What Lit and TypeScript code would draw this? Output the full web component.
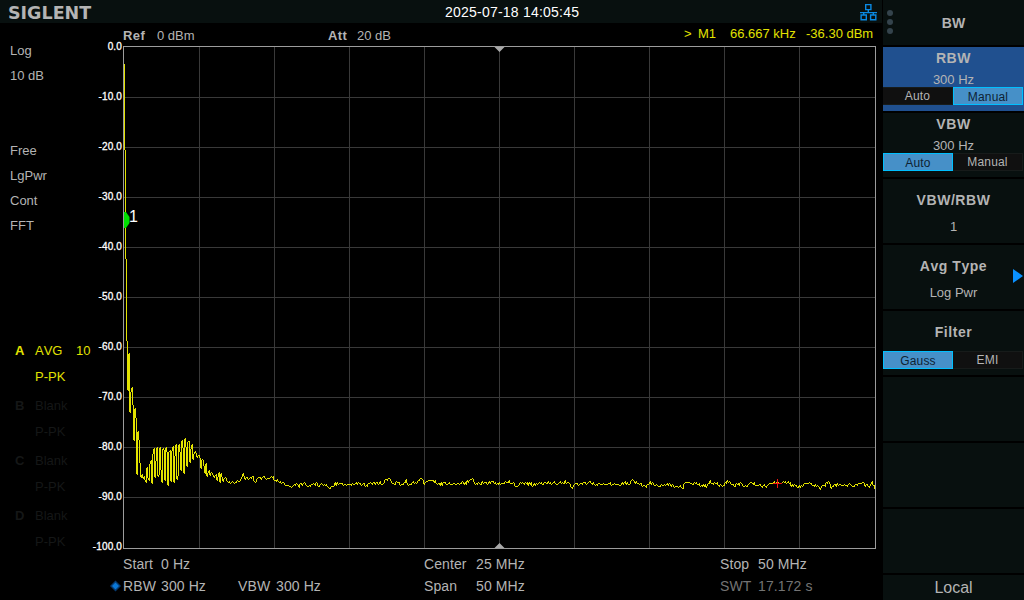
import { LitElement, html, svg, css, nothing } from 'lit';
import { customElement, property } from 'lit/decorators.js';
import { classMap } from 'lit/directives/class-map.js';

interface MenuItem {
  title?: string;
  value?: string;
  options?: string[];
  picked?: number;
  active?: boolean;
  submenu?: boolean;
}

const menu: MenuItem[] = [
  { title: 'RBW', value: '300 Hz', options: ['Auto', 'Manual'], picked: 1, active: true },
  { title: 'VBW', value: '300 Hz', options: ['Auto', 'Manual'], picked: 0 },
  { title: 'VBW/RBW', value: '1' },
  { title: 'Avg Type', value: 'Log Pwr', submenu: true },
  { title: 'Filter', options: ['Gauss', 'EMI'], picked: 0 },
  {},
  {},
  {},
];

const traces = [
  { id: 'A', mode: 'AVG', count: '10', detector: 'P-PK', on: true },
  { id: 'B', mode: 'Blank', count: '', detector: 'P-PK', on: false },
  { id: 'C', mode: 'Blank', count: '', detector: 'P-PK', on: false },
  { id: 'D', mode: 'Blank', count: '', detector: 'P-PK', on: false },
];

const levels = ['0.0', '-10.0', '-20.0', '-30.0', '-40.0', '-50.0', '-60.0', '-70.0', '-80.0', '-90.0', '-100.0'];

// the plot starts at this point of the screen
const PLOT_X = 123;
const PLOT_Y = 46;

// start of the sweep: LO feedthrough and the hump next to it, as x, y
const nearDc = [
  124, 64, 125, 150, 126, 259, 127, 341, 128, 390, 129, 353, 130, 412, 131, 391, 132, 387,
  133, 405, 134, 440, 135, 408, 136, 418, 137, 474, 138, 431, 139, 440, 140, 463, 141, 477, 142, 474,
  143, 478, 144, 476, 145, 480, 146, 482, 147, 467, 148, 478, 149, 480, 150, 463, 151, 460, 152, 483,
  153, 453, 154, 448, 155, 477, 156, 460, 157, 447, 158, 476, 159, 474, 160, 447, 161, 470, 162, 482,
  163, 448, 164, 450, 165, 480, 166, 447, 167, 452, 168, 485, 169, 451, 170, 450, 171, 481, 172, 450,
  173, 446, 174, 482, 175, 455, 176, 444, 177, 479, 178, 475, 179, 444, 180, 452, 181, 470, 182, 440,
  183, 448, 184, 473, 185, 438, 186, 447, 187, 466, 188, 441, 189, 441, 190, 462, 191, 448, 192, 444,
  193, 459, 194, 453, 195, 451, 196, 453, 197, 457, 198, 455, 199, 455, 200, 458, 201, 468, 202, 459,
  203, 460, 204, 466, 205, 473, 206, 463, 207, 476, 208, 472, 209, 470, 210, 475, 211, 472, 212, 473,
  213, 475, 214, 477, 215, 475, 216, 474, 217, 480, 218, 476, 219, 472,
];

// noise floor
const floor = [
  220, 482, 221, 473, 223, 480, 225, 477, 227, 481, 230, 482, 235, 482, 237, 480, 239, 481, 243, 474,
  245, 478, 248, 479, 252, 477, 255, 480, 258, 478, 262, 477, 265, 478, 270, 477, 273, 477, 274, 480,
  280, 481, 283, 483, 288, 486, 292, 487, 294, 484, 298, 486, 304, 482, 308, 487, 313, 483, 320, 485,
  325, 484, 329, 487, 335, 484, 343, 484, 349, 485, 355, 483, 367, 485, 373, 482, 378, 483, 383, 482,
  389, 477, 392, 484, 396, 482, 402, 484, 406, 481, 408, 484, 415, 482, 421, 478, 424, 482, 434, 481,
  437, 484, 447, 483, 455, 484, 462, 481, 465, 483, 472, 479, 475, 483, 487, 483, 493, 481, 500, 484,
  508, 480, 516, 486, 520, 482, 532, 484, 540, 483, 553, 482, 557, 484, 565, 481, 568, 483, 572, 487,
  575, 483, 582, 484, 587, 482, 593, 483, 603, 484, 610, 483, 618, 484, 622, 482, 628, 483, 632, 481,
  637, 482, 640, 484, 646, 486, 650, 482, 657, 485, 665, 484, 673, 485, 683, 487, 685, 482, 698, 484,
  707, 486, 710, 481, 723, 486, 727, 480, 733, 485, 740, 483, 747, 486, 750, 482, 758, 485, 767, 485,
  773, 483, 780, 482, 785, 481, 793, 485, 798, 486, 807, 483, 817, 485, 821, 488, 828, 481, 831, 487,
  837, 484, 845, 484, 853, 485, 862, 482, 868, 486, 872, 482, 875, 488,
];

const points = [...nearDc, ...floor];

function levelAt(x: number): number {
  let k = 0;
  while (k + 4 < points.length && points[k + 2] <= x) k += 2;
  const [x0, y0, x1, y1] = points.slice(k, k + 4);
  let y = y0 + ((y1 - y0) * (x - x0)) / (x1 - x0);
  if (x > 221) {
    const n = Math.abs(Math.sin(x * 12.9898) * 43758.5453) % 1;
    y += (n - 0.5) * 3.4;
  }
  return Math.round(y);
}

// one vertical stroke per screen column, reaching to the next one
function tracePath(): string {
  let d = '';
  for (let x = 124; x < 875; x++) {
    const y = levelAt(x);
    const next = levelAt(x + 1);
    const top = next < y ? next + 1 : y;
    const bottom = next > y ? next : y + 1;
    d += `M${x - PLOT_X + 0.5} ${top - PLOT_Y}V${bottom - PLOT_Y}`;
  }
  return d;
}

@customElement('spectrum-plot')
export class SpectrumPlot extends LitElement {
  static styles = css`
    :host {
      display: block;
      width: 753px;
      height: 503px;
    }

    svg {
      display: block;
    }

    .grid {
      stroke: #393939;
    }

    .frame {
      fill: none;
      stroke: #9c9c9c;
    }

    .trace {
      fill: none;
      stroke: #e2e200;
    }

    .tick {
      fill: #a8a8a8;
    }

    .marker {
      fill: #00e000;
    }

    .cross {
      stroke: #f01414;
    }

    .label {
      fill: #fff;
      font: 16px 'Liberation Sans', Arial, sans-serif;
    }
  `;

  render() {
    const steps = [1, 2, 3, 4, 5, 6, 7, 8, 9];
    return html`
      <svg width="753" height="503" viewBox="0 0 753 503">
        <g shape-rendering="crispEdges">
          ${steps.map(
            (n) => svg`
              <path class="grid" d="M${n * 75 + 1.5} 1V502M1 ${n * 50 + 1.5}H752" />
            `
          )}
          <rect class="frame" x="0.5" y="0.5" width="752" height="502" />
          <path class="trace" d=${tracePath()} />
          <path class="cross" d="M650 437.5H659M654.5 433V442" />
        </g>
        <path class="tick" d="M371.5 1H381.5L376.5 6ZM371.5 502H381.5L376.5 497Z" />
        <path class="marker" d="M1 166H3L6.5 171V177L3 182H1Z" />
        <text class="label" x="6" y="176">1</text>
      </svg>
    `;
  }
}

@customElement('soft-key')
export class SoftKey extends LitElement {
  static styles = css`
    :host {
      display: block;
      height: 64px;
    }

    .key {
      display: grid;
      grid-template-columns: 1fr;
      grid-template-rows: 22px 18px 20px;
      height: 64px;
      background: #08100f;
      color: #b4b4b4;
      text-align: center;
      font-size: 13px;
    }

    .key.plain {
      grid-template-rows: 42px 12px;
    }

    .key.active {
      background: #20508f;
    }

    .key.choice {
      grid-template-rows: 40px 20px;
    }

    .title {
      grid-area: 1 / 1;
      align-self: center;
      font-size: 14px;
      font-weight: bold;
      letter-spacing: 0.55px;
    }

    .choice .title {
      padding-top: 2px;
    }

    .value {
      grid-area: 2 / 1;
      align-self: center;
      line-height: 18px;
      padding-top: 3px;
    }

    .plain .value {
      line-height: 12px;
      padding-top: 0;
    }

    .options {
      grid-column: 1;
      display: flex;
      height: 18px;
    }

    .option {
      box-sizing: border-box;
      width: 70px;
      height: 18px;
      line-height: 17px;
      font-size: 12px;
      letter-spacing: 0.15px;
      background: #101010;
      border: 1px solid #171b1a;
      border-width: 1px 1px 1px 0;
    }

    .option.picked {
      line-height: 18px;
      background: #4690c8;
      border: 1px solid #00bfff;
      color: #0e2233;
    }

    .arrow {
      justify-self: end;
      grid-area: 1 / 1 / 3 / 2;
      margin: 24px 1px 0 0;
    }
  `;

  @property({ attribute: false }) item: MenuItem = {};

  render() {
    const { title, value, options, picked, active, submenu } = this.item;
    const classes = {
      key: true,
      active: !!active,
      plain: !!value && !options,
      choice: !value && !!options,
    };
    return html`
      <div class=${classMap(classes)}>
        ${title ? html`<div class="title">${title}</div>` : nothing}
        ${value ? html`<div class="value">${value}</div>` : nothing}
        ${options
          ? html`<div class="options">
              ${options.map(
                (o, i) => html`<div class=${classMap({ option: true, picked: i === picked })}>${o}</div>`
              )}
            </div>`
          : nothing}
        ${submenu
          ? html`<svg class="arrow" width="10" height="14"><path d="M0 0L10 7L0 14Z" fill="#0a90ff" /></svg>`
          : nothing}
      </div>
    `;
  }
}

@customElement('app-root')
export class AppRoot extends LitElement {
  static styles = css`
    :host {
      display: grid;
      grid-template-columns: 882px 141px;
      column-gap: 1px;
      width: 1024px;
      height: 600px;
      overflow: hidden;
      background: #000;
      color: #b4b4b4;
      font: 13px/1 'Liberation Sans', Arial, sans-serif;
      font-kerning: none;
      white-space: nowrap;
    }

    .header {
      display: grid;
      grid-template-columns: 445px 1fr auto;
      height: 23px;
      background: #08100f;
    }

    .logo {
      padding: 3px 0 0 8px;
      font: bold 17.5px/20px 'DejaVu Sans', sans-serif;
      letter-spacing: 0;
    }

    .clock {
      font-size: 14px;
      line-height: 25px;
      letter-spacing: 0.22px;
      color: #fff;
    }

    .lan {
      margin: 3px 5px 0 0;
    }

    .body {
      display: grid;
      grid-template-columns: 92px 31px 1fr;
      height: 526px;
    }

    .side {
      padding-top: 15px;
    }

    .setup {
      padding-left: 10px;
      line-height: 25px;
    }

    .group {
      margin-bottom: 50px;
    }

    .traces {
      padding-top: 50px;
    }

    .trace {
      display: grid;
      grid-template-columns: 20px 41px 1fr;
      height: 55px;
      padding-left: 15px;
      grid-template-rows: 26px 26px;
      line-height: 26px;
      color: #151717;
    }

    .trace.on {
      color: #e2e200;
    }

    .trace b {
      grid-row: 1 / 3;
    }

    .axis {
      display: flex;
      flex-direction: column;
      height: 526px;
      padding: 18px 1px 0 0;
      box-sizing: border-box;
      align-items: flex-end;
    }

    .level {
      flex: 0 0 50px;
      font-size: 10px;
      line-height: 11px;
      letter-spacing: 0.15px;
      color: #fff;
      -webkit-text-stroke: 0.3px #fff;
    }

    .level:last-child {
      flex-basis: 8px;
    }

    .info {
      display: flex;
      height: 23px;
      line-height: 25px;
    }

    .ref {
      width: 205px;
    }

    .info b {
      display: inline-block;
      letter-spacing: 0.4px;
    }

    .ref b {
      width: 34px;
    }

    .att {
      width: 356px;
    }

    .att b {
      width: 29px;
    }

    .readout {
      display: flex;
      color: #e2e200;
      line-height: 21px;
    }

    .readout span:nth-child(1) {
      width: 14px;
    }

    .readout span:nth-child(2) {
      width: 32px;
    }

    .readout span:nth-child(3) {
      width: 76px;
    }

    .footer {
      display: grid;
      grid-template-columns: 13px 38px 77px 38px 148px 52px 244px 38px 1fr;
      grid-template-rows: 22px 22px;
      padding: 4px 0 0 110px;
      font-size: 14px;
      letter-spacing: 0.1px;
      line-height: 22px;
    }

    .dot {
      align-self: center;
    }

    .dim {
      color: #747474;
    }

    .menu {
      display: flex;
      flex-direction: column;
      gap: 2px;
    }

    .menu-head {
      display: grid;
      grid-template-columns: 14px 1fr 14px;
      height: 45px;
      background: #08100f;
      font-size: 14px;
      font-weight: bold;
      line-height: 46px;
      text-align: center;
    }

    .menu-foot {
      flex: 1;
      background: #08100f;
      font-size: 16px;
      line-height: 26px;
      text-align: center;
    }
  `;

  render() {
    return html`
      <div class="screen">
        <div class="header">
          <div class="logo">SIGLENT</div>
          <div class="clock">2025-07-18 14:05:45</div>
          <svg class="lan" width="17" height="18" fill="none" stroke="#0a8ae4" stroke-width="1.4">
            <path d="M5.7 1.6H10.9V6.6H5.7ZM8.3 6.6V9.5M0 9.6H17M3.7 9.6V12M13.3 9.6V12" />
            <path d="M1.1 12H6.3V16.8H1.1ZM10.6 12H15.8V16.8H10.6Z" />
          </svg>
        </div>
        <div class="body">
          <div class="side">
            <div class="setup">
              <div class="group">
                <div>Log</div>
                <div>10 dB</div>
              </div>
              <div class="group">
                <div>Free</div>
                <div>LgPwr</div>
                <div>Cont</div>
                <div>FFT</div>
              </div>
            </div>
            <div class="traces">
              ${traces.map(
                (t) => html`
                  <div class=${classMap({ trace: true, on: t.on })}>
                    <b>${t.id}</b><span>${t.mode}</span><span>${t.count}</span><span>${t.detector}</span>
                  </div>
                `
              )}
            </div>
          </div>
          <div class="axis">${levels.map((l) => html`<div class="level">${l}</div>`)}</div>
          <div class="chart">
            <div class="info">
              <div class="ref"><b>Ref</b>0 dBm</div>
              <div class="att"><b>Att</b>20 dB</div>
              <div class="readout">
                <span>></span><span>M1</span><span>66.667 kHz</span><span>-36.30 dBm</span>
              </div>
            </div>
            <spectrum-plot></spectrum-plot>
          </div>
        </div>
        <div class="footer">
          <span></span><span>Start</span><span>0 Hz</span><span></span><span></span>
          <span>Center</span><span>25 MHz</span><span>Stop</span><span>50 MHz</span>
          <svg class="dot" width="11" height="12"><path d="M0 6L5.5 0.5L11 6L5.5 11.5Z" fill="#063a70" /><path d="M2 6L5.5 2.5L9 6L5.5 9.5Z" fill="#0a78d8" /></svg>
          <span>RBW</span><span>300 Hz</span><span>VBW</span><span>300 Hz</span>
          <span>Span</span><span>50 MHz</span><span class="dim">SWT</span><span class="dim">17.172 s</span>
        </div>
      </div>
      <div class="menu">
        <div class="menu-head">
          <svg width="14" height="45" fill="#34434c">
            <circle cx="7" cy="13" r="3" />
            <circle cx="7" cy="22" r="3" />
            <circle cx="7" cy="31" r="3" />
          </svg>
          <span>BW</span>
        </div>
        ${menu.map((item) => html`<soft-key .item=${item}></soft-key>`)}
        <div class="menu-foot">Local</div>
      </div>
    `;
  }
}

declare global {
  interface HTMLElementTagNameMap {
    'app-root': AppRoot;
    'soft-key': SoftKey;
    'spectrum-plot': SpectrumPlot;
  }
}
